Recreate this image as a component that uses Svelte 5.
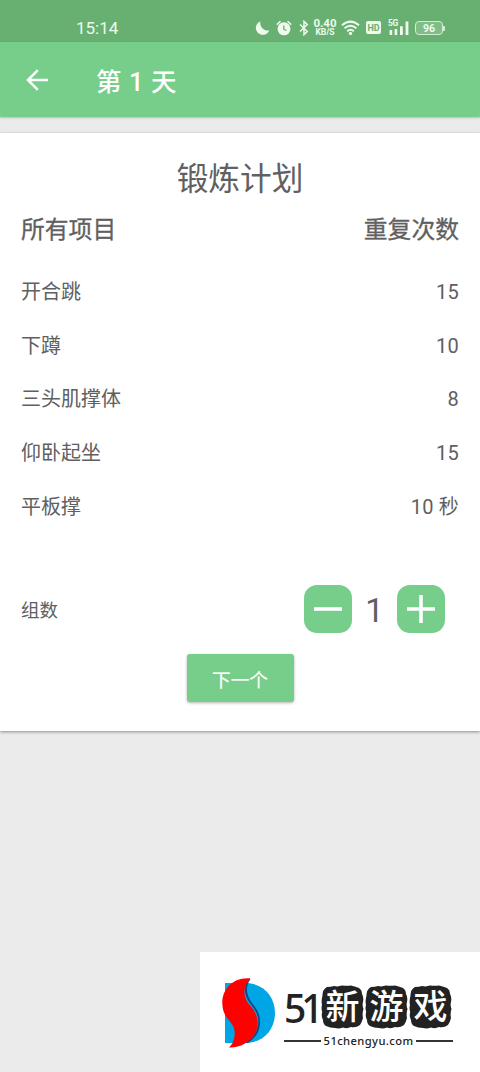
<script lang="ts">
	type Exercise = { name: string; reps: string };

	const exercises: Exercise[] = [
		{ name: '开合跳', reps: '15' },
		{ name: '下蹲', reps: '10' },
		{ name: '三头肌撑体', reps: '8' },
		{ name: '仰卧起坐', reps: '15' },
		{ name: '平板撑', reps: '10 秒' }
	];

	const brandChars = ['新', '游', '戏'];

	let day = $state(1);
	let sets = $state(1);

	function decrease() {
		if (sets > 1) sets -= 1;
	}

	function increase() {
		sets += 1;
	}
</script>

<div class="screen">
	<div class="status-bar">
		<span class="time">15:14</span>
		<div class="status-icons">
			<svg class="moon" width="15" height="16" viewBox="0 0 15 16">
				<path d="M5.4 1.4A6.9 6.9 0 1 0 14.2 10.4A7.6 7.6 0 0 1 5.4 1.4Z" fill="currentColor" />
			</svg>
			<svg class="alarm" width="16" height="16" viewBox="0 0 16 16">
				<circle cx="8" cy="8.8" r="6.5" fill="currentColor" />
				<path d="M1.2 4.2L4 1.6M14.8 4.2L12 1.6" stroke="currentColor" stroke-width="1.5" stroke-linecap="round" />
				<path d="M7.8 5.5V9.2L10.4 10.5" fill="none" stroke="#67b071" stroke-width="1.3" />
			</svg>
			<svg class="bluetooth" width="10" height="16" viewBox="0 0 10 16">
				<path d="M1 4.5L8.3 11.5L5 14.6V1.4L8.3 4.5L1 11.5" fill="none" stroke="currentColor" stroke-width="1.5" />
			</svg>
			<div class="speed">
				<span class="speed-value">0.40</span>
				<span class="speed-unit">KB/S</span>
			</div>
			<svg class="wifi" width="19" height="16" viewBox="0 0 19 16">
				<g fill="none" stroke="currentColor" stroke-width="2">
					<path d="M1 5.2Q9.5 -2 18 5.2" />
					<path d="M3.6 8.2Q9.5 3.2 15.4 8.2" />
					<path d="M6.2 11.2Q9.5 8.4 12.8 11.2" />
				</g>
				<circle cx="9.5" cy="13.4" r="1.7" fill="currentColor" />
			</svg>
			<span class="hd">HD</span>
			<div class="signal">
				<span class="network">5G</span>
				<svg width="22" height="16" viewBox="0 0 22 16">
					<path d="M1.6 10h2.6v5H1.6zM6.6 9h2.6v6H6.6zM12 6.2h2.8V15H12zM17.6 1.5h2.8V15h-2.8z" fill="currentColor" />
				</svg>
			</div>
			<div class="battery">96</div>
		</div>
	</div>

	<header class="app-bar">
		<button class="back" aria-label="返回">
			<svg width="22" height="22" viewBox="0 0 22 22">
				<path d="M22 11H2M11.8 1.2L2 11L11.8 20.8" fill="none" stroke="currentColor" stroke-width="2.5" />
			</svg>
		</button>
		<h1>第 {day} 天</h1>
	</header>

	<main class="card">
		<h2>锻炼计划</h2>
		<div class="list-header">
			<span>所有项目</span>
			<span>重复次数</span>
		</div>
		<ul class="exercises">
			{#each exercises as exercise}
				<li>
					<span>{exercise.name}</span>
					<span class="reps">{exercise.reps}</span>
				</li>
			{/each}
		</ul>
		<div class="sets">
			<span class="sets-label">组数</span>
			<div class="stepper">
				<button class="step" onclick={decrease} aria-label="减少">
					<svg width="28" height="28" viewBox="0 0 28 28">
						<path d="M0 14H28" stroke="currentColor" stroke-width="3.6" />
					</svg>
				</button>
				<span class="sets-count">{sets}</span>
				<button class="step" onclick={increase} aria-label="增加">
					<svg width="28" height="28" viewBox="0 0 28 28">
						<path d="M0 14H28M14 0V28" stroke="currentColor" stroke-width="3.6" />
					</svg>
				</button>
			</div>
		</div>
		<button class="next">下一个</button>
	</main>

	<aside class="brand">
		<svg class="brand-logo" width="54" height="72" viewBox="0 0 54 72">
			<path d="M3 6H23C41 6 53 19 53 36C53 53 41 66 23 66H3Z" fill="#00a5e5" />
			<path
				d="M27 2C22 10 22 18 29 27C38 38 38 44 35 53C33 59 29 62 25 66C33 61 36 56 37 50C39 41 36 34 31 28C24 19 22 11 28 2Z"
				fill="#17407e"
				stroke="#17407e"
				stroke-width="0.8"
			/>
			<path
				d="M28 1.3C10 0 0 13 .3 26C.5 43 12.7 44 12.7 56C12.7 62 11 67 7 70.5C18 71 31 64 34.5 53C38 42 33 34 28.5 29C20 20 21 10 28 1.3Z"
				fill="#fe0000"
			/>
		</svg>
		<div class="brand-text">
			<div class="brand-name">
				<span class="brand-number">51</span>
				{#each brandChars as char}
					<span class="stamp">
						<svg class="stamp-shape" width="43" height="44" viewBox="0 0 43 44">
							<path
								d="M6 2Q10 2 13 1Q17 2 21 .6Q26 1 30 .6Q35 2 38 3Q41 5 41 9Q43 12 42 17Q41 20 42.5 24Q41 28 42 33Q41 37 39 40Q35 43 30 42Q26 44 22 42.5Q18 44 14 43Q9 43 5 41Q2 39 2 35Q0 31 1.2 27Q0 23 1 20Q0 15 1.5 11Q1 5 6 2Z"
								fill="#222"
							/>
						</svg>
						<span class="stamp-char">{char}</span>
					</span>
				{/each}
			</div>
			<div class="brand-site">51chengyu.com</div>
		</div>
	</aside>
</div>

<style>
	:global(body) {
		margin: 0;
		background: #ebebeb;
	}

	.screen {
		position: relative;
		width: 480px;
		height: 1072px;
		overflow: hidden;
		background: #ebebeb;
		color: #606060;
		font-family: Roboto, 'Noto Sans CJK SC', sans-serif;
	}

	button {
		border: none;
		padding: 0;
		font-family: inherit;
		color: #fff;
		cursor: pointer;
	}

	svg {
		display: block;
	}

	.status-bar {
		display: flex;
		justify-content: space-between;
		box-sizing: border-box;
		height: 42px;
		padding: 13px 35px 0 76px;
		background: #67b071;
		color: #eefbed;
	}

	.time {
		height: 30px;
		font-size: 17px;
		line-height: 30px;
	}

	.status-icons {
		display: flex;
		align-items: center;
		height: 29px;
	}

	.alarm {
		margin-left: 6px;
	}

	.bluetooth {
		margin-left: 7px;
	}

	.speed {
		display: flex;
		flex-direction: column;
		align-items: center;
		width: 24px;
		margin-left: 4px;
		font-weight: 700;
	}

	.speed-value {
		font-size: 11.5px;
		line-height: 10px;
	}

	.speed-unit {
		font-size: 8.5px;
		line-height: 9px;
	}

	.wifi {
		margin-left: 4px;
	}

	.hd {
		width: 15px;
		height: 13px;
		margin-left: 6px;
		border-radius: 2px;
		background: #eefbed;
		color: #67b071;
		font-size: 9px;
		font-weight: 700;
		line-height: 14px;
		text-align: center;
	}

	.signal {
		position: relative;
		margin-left: 7px;
	}

	.network {
		position: absolute;
		top: -1px;
		left: 0;
		font-size: 8.5px;
		font-weight: 700;
		line-height: 9px;
		letter-spacing: -0.5px;
	}

	.battery {
		position: relative;
		box-sizing: border-box;
		width: 28px;
		height: 14px;
		margin: 0 2px 0 5px;
		border: 1.5px solid #d3edd3;
		border-radius: 4px;
		background: #80be88;
		font-size: 10.5px;
		font-weight: 700;
		line-height: 13px;
		text-align: center;
	}

	.battery::after {
		content: '';
		position: absolute;
		top: 4px;
		right: -3px;
		width: 2px;
		height: 5px;
		border-radius: 0 1px 1px 0;
		background: #d3edd3;
	}

	.app-bar {
		display: flex;
		align-items: center;
		height: 75px;
		padding-left: 26px;
		background: #76ce8a;
		color: #fff;
		box-shadow: 0 1px 2px rgba(0, 0, 0, 0.2);
	}

	.back {
		background: none;
	}

	h1 {
		margin: 5px 0 0 48px;
		font-size: 25.5px;
		font-weight: 500;
		line-height: 36px;
		letter-spacing: 0.6px;
	}

	.card {
		display: flex;
		flex-direction: column;
		box-sizing: border-box;
		height: 598px;
		margin-top: 16px;
		padding: 23px 21px 0;
		background: #fff;
		box-shadow: 0 1px 3px rgba(0, 0, 0, 0.4);
	}

	h2 {
		margin: 0;
		font-size: 31.7px;
		font-weight: 400;
		line-height: 48px;
		text-align: center;
	}

	.list-header {
		display: flex;
		justify-content: space-between;
		margin-top: 8px;
		font-size: 23.8px;
		line-height: 36px;
		-webkit-text-stroke: 0.3px currentColor;
	}

	.exercises {
		margin: 18px 0 0;
		padding: 0;
		list-style: none;
	}

	.exercises li {
		display: flex;
		justify-content: space-between;
		font-size: 20px;
		line-height: 53.7px;
	}

	.reps {
		letter-spacing: 0.2px;
	}

	.sets {
		display: flex;
		align-items: center;
		justify-content: space-between;
		margin-top: 50px;
		padding-right: 14px;
	}

	.sets-label {
		font-size: 18.5px;
	}

	.stepper {
		display: flex;
		align-items: center;
	}

	.step {
		display: flex;
		align-items: center;
		justify-content: center;
		width: 48px;
		height: 48px;
		border-radius: 13px;
		background: #76ce8a;
	}

	.sets-count {
		width: 45px;
		height: 48px;
		font-size: 33px;
		line-height: 51px;
		text-align: center;
	}

	.next {
		align-self: center;
		width: 107px;
		height: 48px;
		margin-top: 21px;
		padding-top: 1px;
		border-radius: 3px;
		background: #76ce8a;
		font-size: 18.7px;
		box-shadow: 0 1px 3px rgba(0, 0, 0, 0.3);
		-webkit-text-stroke: 0.2px currentColor;
	}

	/* site badge laid over the bottom corner */
	.brand {
		position: absolute;
		right: 0;
		bottom: 0;
		display: flex;
		align-items: flex-start;
		box-sizing: border-box;
		width: 280px;
		height: 120px;
		padding: 25px 0 0 22px;
		background: #fff;
		color: #222;
	}

	.brand-text {
		width: 169px;
		margin: 8px 0 0 8px;
	}

	.brand-name {
		display: flex;
		gap: 1px;
	}

	.brand-number {
		width: 36px;
		font-family: 'Noto Sans', sans-serif;
		font-size: 39px;
		font-weight: 500;
		line-height: 45px;
		letter-spacing: -5px;
	}

	.stamp {
		position: relative;
		width: 43px;
		height: 44px;
	}

	.stamp-char {
		position: absolute;
		inset: 0;
		color: #fff;
		font-size: 34px;
		font-weight: 500;
		line-height: 44px;
		text-align: center;
	}

	.brand-site {
		display: flex;
		align-items: center;
		gap: 3px;
		margin-top: 3px;
		font-family: 'Noto Sans', sans-serif;
		font-size: 11.2px;
		font-weight: 500;
		line-height: 16px;
		letter-spacing: 0.4px;
	}

	.brand-site::before,
	.brand-site::after {
		content: '';
		flex: 1;
		height: 2.5px;
		background: #333;
	}
</style>
